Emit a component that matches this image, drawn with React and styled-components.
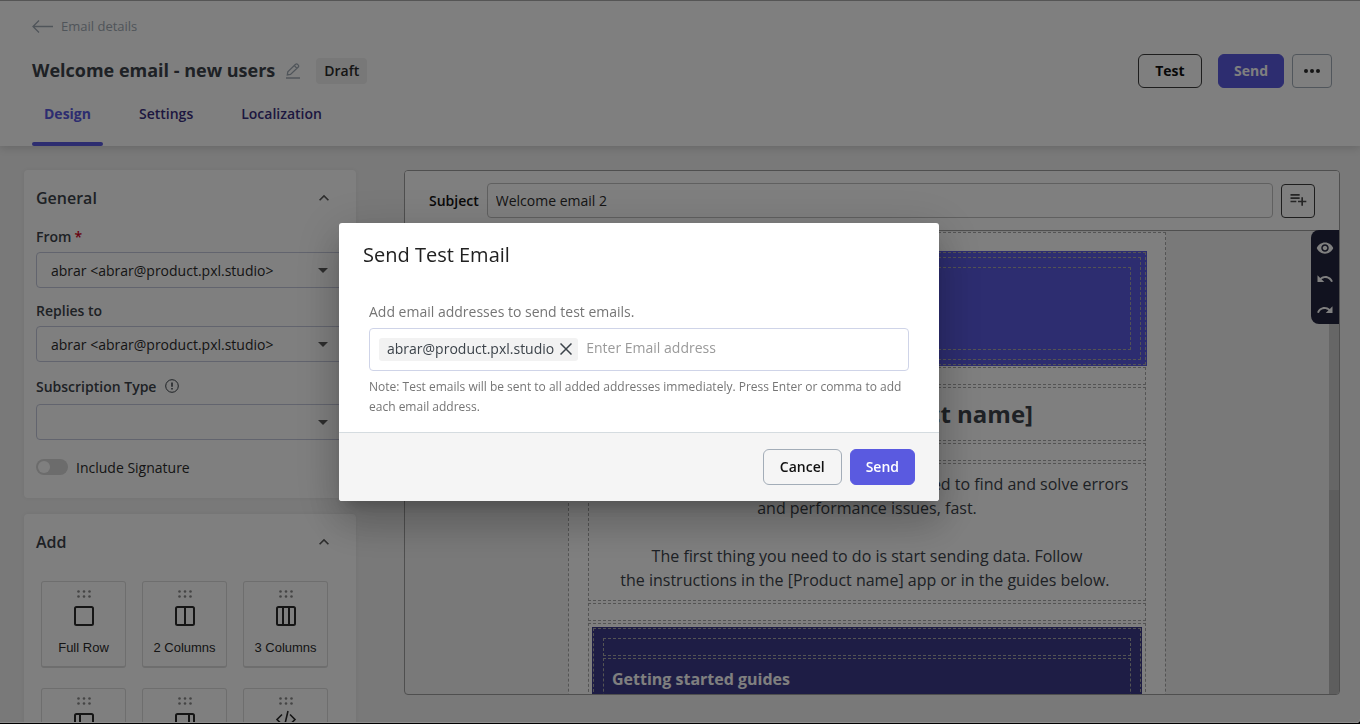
import { useState } from "react";
import styled, { createGlobalStyle, css } from "styled-components";
import {
  MdExpandLess,
  MdPlaylistAdd,
  MdRedo,
  MdUndo,
  MdVisibility,
} from "react-icons/md";

const tabs = ["Design", "Settings", "Localization"];

const blocks = [
  { label: "Full Row", icon: "full" },
  { label: "2 Columns", icon: "two" },
  { label: "3 Columns", icon: "three" },
  { label: "Left Bar", icon: "left" },
  { label: "Right Bar", icon: "right" },
  { label: "HTML", icon: "code" },
];

const dividers = {
  full: "",
  two: "M10 1v18",
  three: "M7 1v18M13 1v18",
  left: "M6 1v18",
  right: "M14 1v18",
};

const BlockIcon = ({ type }) =>
  type === "code" ? (
    <svg width="20" height="20" viewBox="0 0 20 20" overflow="visible" fill="none" stroke="#2b2b2b" strokeWidth="1.600">
      <path d="M6 1.500L1 6.500l5 5M14 1.500l5 5-5 5M12-2L8 15" />
    </svg>
  ) : (
    <svg width="20" height="20" viewBox="0 0 20 20" fill="none" stroke="#2b2b2b" strokeWidth="2">
      <rect x="1" y="1" width="18" height="18" rx="1.500" />
      <path d={dividers[type]} />
    </svg>
  );

const DragDots = () => (
  <svg width="14" height="8" viewBox="0 0 14 8" fill="#8a8a8a">
    {[1.5, 7, 12.5].map((x) => (
      <g key={x}>
        <circle cx={x} cy="1.500" r="1.300" />
        <circle cx={x} cy="6.500" r="1.300" />
      </g>
    ))}
  </svg>
);

const SelectField = ({ id, label, required, help, options }) => (
  <Field>
    <LabelRow $tall={help}>
      <label htmlFor={id}>{label}</label>
      {required && <Required>*</Required>}
      {help && (
        <svg width="14" height="14" viewBox="0 0 14 14" fill="none" stroke="#3c434a">
          <circle cx="7" cy="7" r="6.300" />
          <path d="M7 3.500v4.300M7 9v1.500" strokeWidth="1.500" />
        </svg>
      )}
    </LabelRow>
    <SelectBox>
      <select id={id}>
        {options.map((option) => (
          <option key={option}>{option}</option>
        ))}
      </select>
      <svg width="10" height="5" viewBox="0 0 10 5" fill="#5a5a5a">
        <path d="M0 0h10L5 5z" />
      </svg>
    </SelectBox>
  </Field>
);

const Header = () => {
  const [active, setActive] = useState("Design");

  return (
    <TopBar>
      <Crumb href="#">
        <svg width="21" height="13" viewBox="0 0 21 13" fill="none" stroke="currentColor" strokeWidth="1.300">
          <path d="M21 6.500H1M7 .5l-6 6 6 6" />
        </svg>
        Email details
      </Crumb>
      <TitleRow>
        <h1>Welcome email - new users</h1>
        <IconButton aria-label="Rename">
          <svg width="14" height="16" viewBox="0 0 14 16" fill="none" stroke="#a0aab4" strokeWidth="1.300">
            <path d="M1.300 12l.5-3.200L9.600 1.300a1.300 1.300 0 0 1 1.900 0l.8.8a1.300 1.300 0 0 1 0 1.900L4.500 11.500zM8.300 2.600l2.600 2.600" />
            <path d="M0 15h14" strokeWidth="1.500" />
          </svg>
        </IconButton>
        <Badge>Draft</Badge>
        <Actions>
          <TestButton $bold>Test</TestButton>
          <Button $primary $bold>Send</Button>
          <MoreButton aria-label="More actions">
            <svg width="16" height="4" viewBox="0 0 16 4" fill="#2b2b2b">
              <circle cx="2" cy="2" r="2" />
              <circle cx="8" cy="2" r="2" />
              <circle cx="14" cy="2" r="2" />
            </svg>
          </MoreButton>
        </Actions>
      </TitleRow>
      <Tabs>
        {tabs.map((tab) => (
          <Tab key={tab} $active={tab === active} onClick={() => setActive(tab)}>
            {tab}
          </Tab>
        ))}
      </Tabs>
    </TopBar>
  );
};

const Sidebar = () => (
  <Side>
    <Card>
      <CardHead>
        <h2>General</h2>
        <MdExpandLess size={20} />
      </CardHead>
      <SelectField id="from" label="From" required options={["abrar <abrar@product.pxl.studio>"]} />
      <SelectField id="replies" label="Replies to" options={["abrar <abrar@product.pxl.studio>"]} />
      <SelectField id="subscription" label="Subscription Type" help options={[""]} />
      <Toggle>
        <input type="checkbox" />
        Include Signature
      </Toggle>
    </Card>
    <Card>
      <CardHead>
        <h2>Add</h2>
        <MdExpandLess size={20} />
      </CardHead>
      <Blocks>
        {blocks.map((block) => (
          <Block key={block.label}>
            <DragDots />
            <BlockIcon type={block.icon} />
            <span>{block.label}</span>
          </Block>
        ))}
      </Blocks>
    </Card>
  </Side>
);

const Editor = () => (
  <Panel>
    <SubjectBar>
      <label htmlFor="subject">Subject</label>
      <input id="subject" defaultValue="Welcome email 2" />
      <InsertButton aria-label="Insert variable">
        <MdPlaylistAdd size={20} />
      </InsertButton>
    </SubjectBar>
    <Canvas>
      <Mail>
        <Hero>
          <Dashed $pad={4}>
            <Dashed $pad={9}>
              <Dashed $height={83} />
            </Dashed>
          </Dashed>
        </Hero>
        <Rows>
          <Dashed $height={18} />
          <Dashed $pad={8}>
            <MailTitle>Welcome to [Product name]</MailTitle>
          </Dashed>
          <Dashed $height={18} />
          <Dashed $pad={8}>
            <MailText>
              [Product name] gives you everything you need to find and solve errors
              <br />
              and performance issues, fast.
            </MailText>
            <br />
            <MailText>
              The first thing you need to do is start sending data. Follow
              <br />
              the instructions in the [Product name] app or in the guides below.&nbsp;
            </MailText>
          </Dashed>
          <Dashed $height={18} />
          <Dashed $pad={3}>
            <Guides>
              <Dashed $pad={9}>
                <Rows $flush>
                  <Dashed $height={18} />
                  <Dashed $pad={8} $height={90}>
                    <GuidesTitle>Getting started guides</GuidesTitle>
                  </Dashed>
                </Rows>
              </Dashed>
            </Guides>
          </Dashed>
        </Rows>
      </Mail>
      <Scrollbar>
        <Thumb />
      </Scrollbar>
    </Canvas>
    <Tools>
      <button aria-label="Preview"><MdVisibility size={18} /></button>
      <button aria-label="Undo"><MdUndo size={18} /></button>
      <button aria-label="Redo"><MdRedo size={18} /></button>
    </Tools>
  </Panel>
);

const TestDialog = () => (
  <Overlay>
    <Dialog role="dialog" aria-labelledby="dialog-title">
      <DialogTitle id="dialog-title">Send Test Email</DialogTitle>
      <DialogBody>
        <label htmlFor="emails">Add email addresses to send test emails.</label>
        <ChipInput>
          <Chip>
            abrar@product.pxl.studio
            <IconButton aria-label="Remove address">
              <svg width="12" height="12" viewBox="0 0 12 12" stroke="#3c434a" strokeWidth="1.500">
                <path d="M.5.5l11 11M11.500.5l-11 11" />
              </svg>
            </IconButton>
          </Chip>
          <input id="emails" placeholder="Enter Email address" />
        </ChipInput>
        <p>
          Note: Test emails will be sent to all added addresses immediately. Press Enter or
          comma to add each email address.
        </p>
      </DialogBody>
      <DialogFooter>
        <Button $large>Cancel</Button>
        <Button $large $primary>Send</Button>
      </DialogFooter>
    </Dialog>
  </Overlay>
);

export default () => (
  <>
    <GlobalStyle />
    <Page>
      <Header />
      <Body>
        <Sidebar />
        <Editor />
      </Body>
    </Page>
    <TestDialog />
  </>
);

const GlobalStyle = createGlobalStyle`
  * {
    box-sizing: border-box;
  }

  html {
    background: #000;
  }

  body {
    margin: 0;
    font-family: "Open Sans", "Noto Sans", sans-serif;
    font-size: 14px;
    color: #2b2b2b;
  }

  h1, h2, h3, p {
    margin: 0;
  }

  button, input, select {
    font: inherit;
    color: inherit;
  }

  button {
    cursor: pointer;
  }

  svg {
    flex: none;
    display: block;
  }
`;

const Page = styled.div`
  height: calc(100vh - 1px);
  display: flex;
  flex-direction: column;
  overflow: hidden;
  background: #f2f2f2;
  border-radius: 0 0 4px 0;
`;

const TopBar = styled.header`
  position: relative;
  padding: 14px 28px 0 32px;
  background: #fff;
  box-shadow: 0 2px 8px rgba(0, 0, 0, 0.15);
`;

const Crumb = styled.a`
  display: flex;
  align-items: center;
  gap: 8px;
  font-size: 13px;
  line-height: 24px;
  color: #a0aab4;
  text-decoration: none;
`;

const TitleRow = styled.div`
  display: flex;
  align-items: center;
  margin-top: 16px;

  h1 {
    margin-right: 11px;
    padding-bottom: 2px;
    font-size: 18px;
    font-weight: 700;
    line-height: 32px;
    color: #3c434a;
  }
`;

const IconButton = styled.button`
  padding: 0;
  border: 0;
  background: none;
`;

const Badge = styled.span`
  margin-left: 16px;
  padding: 0 8px;
  border-radius: 4px;
  font-weight: 600;
  line-height: 26px;
  background: #f0f0f0;
`;

const Actions = styled.div`
  margin-left: auto;
  display: flex;
  gap: 8px;
`;

const Button = styled.button`
  height: ${(props) => (props.$large ? 36 : 34)}px;
  padding: 0 16px;
  border: 1px solid ${(props) => (props.$large ? "#a3adb8" : "#3c3c3c")};
  border-radius: 6px;
  font-weight: ${(props) => (props.$bold ? 700 : 600)};
  line-height: ${(props) => (props.$bold ? 18 : 20)}px;
  color: #111;
  background: none;

  ${(props) =>
    props.$primary &&
    css`
      padding: 0 15px;
      color: #fff;
      border-color: #5a5ae0;
      background: #5a5ae0;
    `}
`;

const TestButton = styled(Button)`
  min-width: 64px;
  margin-right: 8px;
`;

const MoreButton = styled.button`
  width: 40px;
  height: 34px;
  display: flex;
  align-items: center;
  justify-content: center;
  border: 1px solid #a3adb8;
  border-radius: 4px;
  background: none;
`;

const Tabs = styled.nav`
  display: flex;
  gap: 24px;
`;

const Tab = styled.button`
  position: relative;
  padding: 16px 12px 22px;
  border: 0;
  font-weight: ${(props) => (props.$active ? 700 : 600)};
  line-height: 20px;
  color: ${(props) => (props.$active ? "#5a5ae0" : "#3b2f80")};
  background: none;

  &::after {
    content: "";
    position: absolute;
    left: 0;
    right: 0;
    bottom: 0;
    height: 4px;
    border-radius: 2px;
    background: ${(props) => (props.$active ? "#5a5ae0" : "none")};
  }
`;

const Body = styled.div`
  flex: 1;
  min-height: 0;
  display: flex;
  gap: 48px;
  padding: 24px 20px 0 24px;
`;

const Side = styled.aside`
  width: 332px;
  flex: none;
`;

const Card = styled.section`
  margin-bottom: 16px;
  padding: 0 12px 16px;
  border-radius: 4px;
  background: #fff;
  box-shadow: 0 0 4px rgba(0, 0, 0, 0.06);
`;

const CardHead = styled.div`
  height: 56px;
  padding-right: 10px;
  display: flex;
  align-items: center;
  justify-content: space-between;
  color: #5a5a5a;

  h2 {
    font-size: 16px;
    font-weight: 600;
    color: #3c434a;
  }
`;

const Field = styled.div`
  margin-bottom: 12px;
`;

const LabelRow = styled.div`
  height: ${(props) => (props.$tall ? 24 : 20)}px;
  margin-bottom: 6px;
  display: flex;
  align-items: center;
  font-weight: 600;
  color: #3c434a;

  svg {
    margin-left: 9px;
  }
`;

const Required = styled.span`
  margin-left: 3px;
  font-weight: 600;
  color: #d0021b;
`;

const SelectBox = styled.div`
  position: relative;

  select {
    width: 100%;
    height: 36px;
    padding: 0 14px;
    appearance: none;
    border: 1px solid #c5c9dc;
    border-radius: 4px;
    background: none;
  }

  svg {
    position: absolute;
    top: 16px;
    right: 16px;
    pointer-events: none;
  }
`;

const Toggle = styled.label`
  height: 30px;
  display: flex;
  align-items: center;
  gap: 8px;

  input {
    width: 32px;
    height: 16px;
    margin: 0;
    padding: 2px;
    appearance: none;
    border-radius: 8px;
    background: #d8d8d8;
  }

  input::before {
    content: "";
    display: block;
    width: 12px;
    height: 12px;
    border-radius: 50%;
    background: #fff;
  }

  input:checked::before {
    margin-left: auto;
  }
`;

const Blocks = styled.div`
  display: grid;
  grid-template-columns: repeat(3, 85px);
  gap: 20px 16px;
  padding: 11px 0 0 5px;
`;

const Block = styled.button`
  height: 87px;
  padding: 8px 0 0;
  display: flex;
  flex-direction: column;
  align-items: center;
  gap: 8px;
  border: 1px solid #ddd;
  border-bottom-width: 2px;
  border-radius: 3px;
  font-family: "Liberation Sans", Arial, sans-serif;
  font-size: 13px;
  background: #fff;

  span {
    margin-top: 6px;
    line-height: 16px;
  }
`;

const Panel = styled.main`
  position: relative;
  flex: 1;
  min-width: 0;
  margin-bottom: 28px;
  display: flex;
  flex-direction: column;
  border: 1px solid #9e9e9e;
  border-radius: 4px;
  overflow: hidden;
`;

const SubjectBar = styled.div`
  padding: 12px 24px;
  display: flex;
  gap: 8px;
  align-items: center;
  border-bottom: 1px solid #9e9e9e;
  background: #fff;

  label {
    font-weight: 600;
    color: #111;
  }

  input {
    flex: 1;
    min-width: 0;
    height: 35px;
    padding: 0 8px;
    border: 1px solid #c0c0c0;
    border-radius: 4px;
    background: none;
  }
`;

const InsertButton = styled.button`
  width: 34px;
  height: 34px;
  padding: 0 0 4px;
  display: flex;
  align-items: center;
  justify-content: center;
  border: 1px solid #3c3c3c;
  border-radius: 4px;
  color: #4a4a4a;
  background: none;
`;

const Canvas = styled.div`
  flex: 1;
  min-height: 0;
  display: flex;
`;

const Mail = styled.article`
  width: 598px;
  height: max-content;
  margin: 1px auto 0;
  padding: 18px;
  border: 1px dashed #a8a8a8;
  font-size: 16px;
  line-height: 24px;
  color: #3c434a;
  background: #fff;
`;

const Dashed = styled.div`
  height: ${(props) => (props.$height ? `${props.$height}px` : "auto")};
  padding: ${(props) => props.$pad || 0}px;
  border: 1px dashed #a8a8a8;
`;

const Hero = styled.div`
  padding: 1px;
  background: #5a5ae0;
`;

const Rows = styled.div`
  margin: ${(props) => (props.$flush ? "0" : "1px 1px 0")};
  display: flex;
  flex-direction: column;
  gap: 2px;
`;

const MailTitle = styled.h1`
  font-size: 24px;
  line-height: 36px;
  text-align: center;
`;

const MailText = styled.p`
  text-align: center;
  white-space: nowrap;
`;

const Guides = styled.div`
  padding: 1px;
  color: #fff;
  background: #3c3a8a;
`;

const GuidesTitle = styled.h3`
  font-size: 16px;
`;

const Scrollbar = styled.div`
  width: 10px;
  flex: none;
  display: flex;
  flex-direction: column;
  justify-content: flex-end;
  background: #ccc;
`;

const Thumb = styled.div`
  height: 44%;
  background: #bcbcbc;
`;

// sits on top of the canvas, under the subject bar
const Tools = styled.div`
  position: absolute;
  top: 59px;
  right: 0;
  width: 28px;
  height: 94px;
  padding-top: 2px;
  border-radius: 8px 0 0 8px;
  color: #fff;
  background: #23253e;

  button {
    width: 28px;
    height: 31px;
    padding: 0;
    display: flex;
    align-items: center;
    justify-content: center;
    border: 0;
    background: none;
  }
`;

const Overlay = styled.div`
  position: fixed;
  inset: 0 0 1px;
  padding: 1px 82px 0 0;
  display: flex;
  align-items: center;
  justify-content: center;
  border-top: 1px solid #555;
  border-bottom: 1px solid #8c8c8c;
  border-radius: 0 0 4px 0;
  background: rgba(0, 0, 0, 0.5);
`;

const Dialog = styled.div`
  width: 600px;
  max-width: 100%;
  border-radius: 3px;
  overflow: hidden;
  background: #fff;
  box-shadow: 0 11px 15px -7px rgba(0, 0, 0, 0.2),
    0 24px 38px 3px rgba(0, 0, 0, 0.14), 0 9px 46px 8px rgba(0, 0, 0, 0.12);
`;

const DialogTitle = styled.h2`
  padding: 0 24px;
  font-size: 20px;
  font-weight: 400;
  line-height: 64px;
  color: #212121;
`;

const DialogBody = styled.div`
  padding: 15px 30px;
  color: #757575;

  label {
    display: block;
    line-height: 20px;
  }

  p {
    font-size: 12px;
    line-height: 20px;
  }
`;

const ChipInput = styled.div`
  height: 43px;
  margin: 6px 0;
  padding: 0 9px;
  display: flex;
  align-items: center;
  gap: 8px;
  border: 1px solid #cfd4e8;
  border-radius: 4px;

  input {
    flex: 1;
    min-width: 0;
    height: 24px;
    padding: 0 0 4px;
    border: 0;
    outline: 0;
  }

  input::placeholder {
    color: #9a9a9a;
  }
`;

const Chip = styled.span`
  padding: 0 6px 2px 8px;
  display: flex;
  align-items: center;
  gap: 6px;
  border-radius: 3px;
  line-height: 21px;
  color: #3c434a;
  background: #f2f2f2;
`;

const DialogFooter = styled.div`
  padding: 16px 24px;
  display: flex;
  justify-content: flex-end;
  gap: 8px;
  border-top: 1px solid #d5dce0;
  background: #f5f5f5;
`;
